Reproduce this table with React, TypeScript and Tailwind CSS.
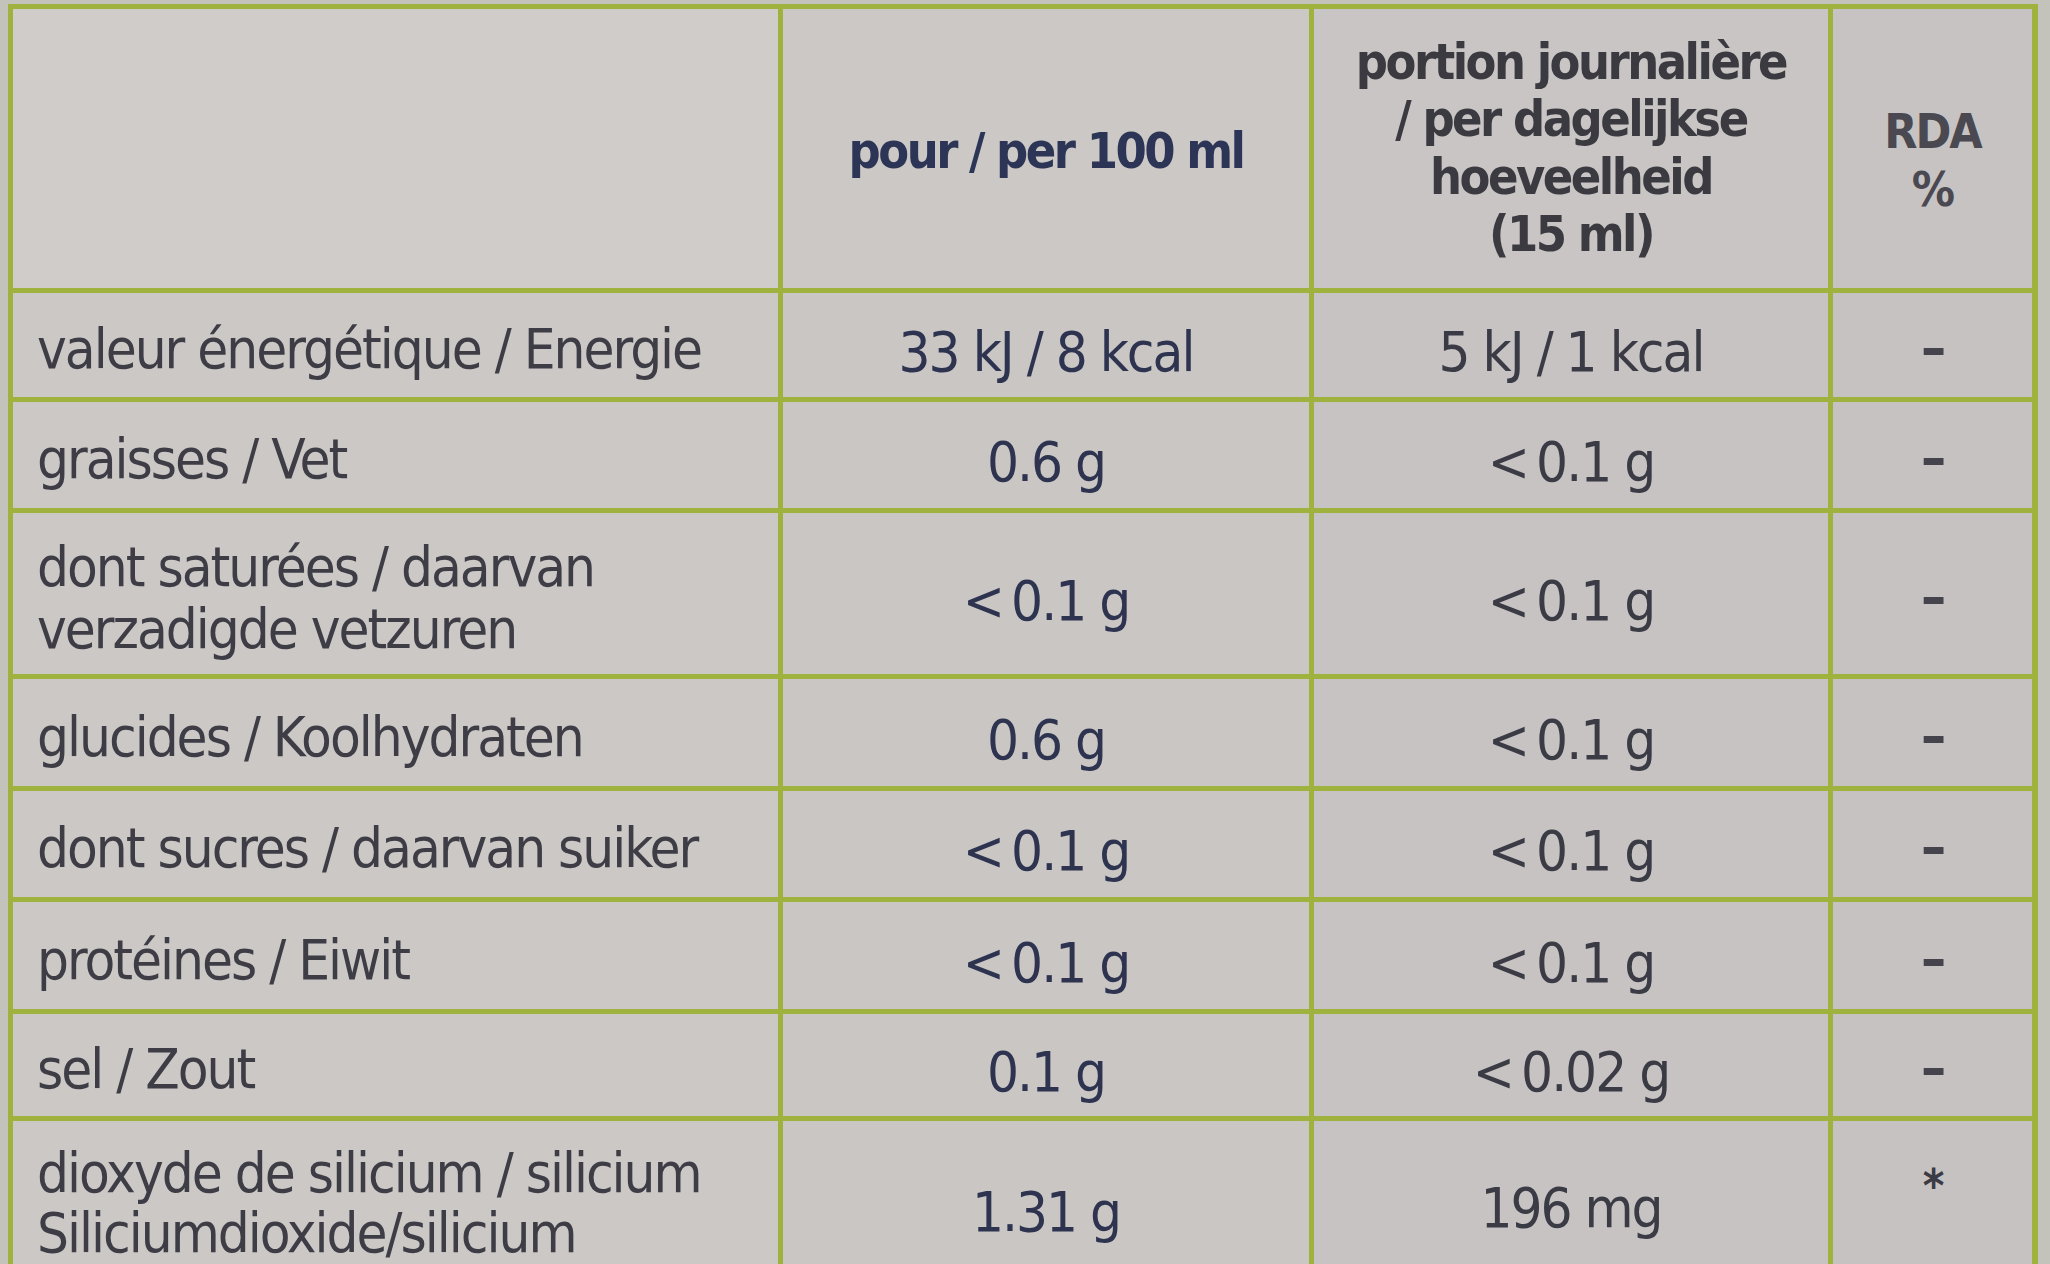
import React from "react";

const font = {
  fontFamily: '"Liberation Sans Narrow", "DejaVu Sans Condensed", "Liberation Sans", sans-serif',
};

type Row = { label: React.ReactNode; a: string; b: string; c: string; h: string };

const lt = (v: string) => `<\u2009${v}`;

const rows: Row[] = [
  { label: "valeur énergétique / Energie", a: "33 kJ / 8 kcal", b: "5 kJ / 1 kcal", c: "–", h: "h-[104px]" },
  { label: "graisses / Vet", a: "0.6 g", b: lt("0.1 g"), c: "–", h: "h-[106px]" },
  {
    label: (
      <>
        dont saturées / daarvan
        <br />
        verzadigde vetzuren
      </>
    ),
    a: lt("0.1 g"),
    b: lt("0.1 g"),
    c: "–",
    h: "h-[161px]",
  },
  { label: "glucides / Koolhydraten", a: "0.6 g", b: lt("0.1 g"), c: "–", h: "h-[107px]" },
  { label: "dont sucres / daarvan suiker", a: lt("0.1 g"), b: lt("0.1 g"), c: "–", h: "h-[106px]" },
  { label: "protéines / Eiwit", a: lt("0.1 g"), b: lt("0.1 g"), c: "–", h: "h-[107px]" },
  { label: "sel / Zout", a: "0.1 g", b: lt("0.02 g"), c: "–", h: "h-[102px]" },
];

export default function App() {
  return (
    <div className="w-[2050px] h-[1264px] overflow-hidden bg-[#c3c3bc] pt-[4px] pl-[8px]" style={font}>
      <div className="w-[2030px] bg-[#a0b23e] p-[5px] pr-[4px]">
        <div className="grid grid-cols-[765px_526px_514px_199px] gap-[5px] text-[56px] leading-[1.1] tracking-[-2px]">
          {/* header */}
          <div className="h-[279px] bg-[#cfccca]" />
          <div className="h-[279px] bg-[#cbc8c6] flex items-center justify-center pt-[6px]">
            <span className="text-[#2c3555] font-bold text-[50px] tracking-[-2.5px]">pour / per 100 ml</span>
          </div>
          <div className="h-[279px] bg-[#c9c5c4] flex items-center justify-center text-center">
            <span className="text-[#3a3a40] font-bold text-[50px] leading-[1.15] tracking-[-2.5px]">
              portion journalière
              <br />/ per dagelijkse
              <br />
              hoeveelheid
              <br />
              (15 ml)
            </span>
          </div>
          <div className="h-[279px] bg-[#c7c3c2] flex items-start justify-center text-center pt-[94px]">
            <span className="text-[#4a4850] font-bold text-[48px] leading-[1.2] tracking-[-2px]">
              RDA
              <br />%
            </span>
          </div>

          {rows.map((r, i) => (
            <React.Fragment key={i}>
              <div className={`${r.h} bg-[#cbc8c6] flex items-center pl-[24px] pt-[8px] text-[#3e3d46]`}>
                <span>{r.label}</span>
              </div>
              <div className={`${r.h} bg-[#c9c6c4] flex items-center justify-center pt-[14px] text-[#2e3450]`}>
                <span>{r.a}</span>
              </div>
              <div className={`${r.h} bg-[#c7c3c2] flex items-center justify-center pt-[14px] text-[#3b3b45]`}>
                <span>{r.b}</span>
              </div>
              <div className={`${r.h} bg-[#c6c2c1] flex items-center justify-center pt-[6px] text-[#45434c]`}>
                <span className="font-bold">{r.c}</span>
              </div>
            </React.Fragment>
          ))}

          {/* silicium row */}
          <div className="h-[200px] bg-[#cbc8c6] pl-[24px] pt-[22px] text-[#3e3d46] leading-[1.08]">
            dioxyde de silicium / silicium
            <br />
            Siliciumdioxide/silicium
          </div>
          <div className="h-[200px] bg-[#c9c6c4] flex justify-center pt-[60px] text-[#2e3450]">
            <span>1.31 g</span>
          </div>
          <div className="h-[200px] bg-[#c7c3c2] flex justify-center pt-[56px] text-[#3b3b45]">
            <span>196 mg</span>
          </div>
          <div className="h-[200px] bg-[#c6c2c1] flex justify-center pt-[40px] text-[#3b3b45]">
            <span className="font-bold text-[46px]">*</span>
          </div>
        </div>
      </div>
    </div>
  );
}
